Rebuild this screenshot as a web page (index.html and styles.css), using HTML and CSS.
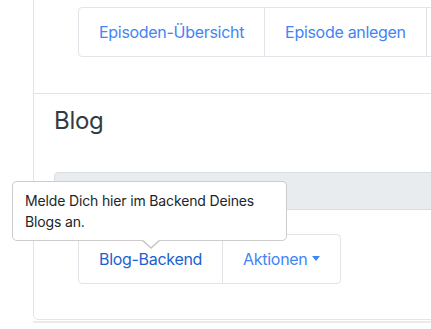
FILE: index.html
```html
<!DOCTYPE html>
<html lang="de">
<head>
  <meta charset="UTF-8">
  <meta name="viewport" content="width=device-width, initial-scale=1.0">
  <title>Podcast</title>
  <link rel="stylesheet" href="styles.css">
</head>
<body>
<div class="page">
  <div class="card">
    <div class="card-section">
      <div class="btn-group">
        <a class="btn" href="#">Episoden-Übersicht</a>
        <a class="btn" href="#">Episode anlegen</a>
        <a class="btn" href="#">Podcast-Einstellungen</a>
      </div>
    </div>

    <div class="card-section blog">
      <h4 class="section-title">Blog</h4>
      <div class="status-bar"></div>
      <div class="btn-group">
        <a class="btn btn-focus" href="#">Blog-Backend</a>
        <a class="btn dropdown-toggle" href="#">Aktionen</a>
        <div class="popover">Melde Dich hier im Backend Deines Blogs an.</div>
      </div>
    </div>
  </div>

  <div class="card-next"></div>
</div>
</body>
</html>
```

FILE: styles.css
```css
* {
  box-sizing: border-box;
}

:root {
  --link: #4285f4;
  --link-dark: #1c5fd0;
  --border: #e1e4e8;
  --light-gray: #e9ecef;
  --text: #212529;
}

html, body {
  margin: 0;
  padding: 0;
  overflow: hidden;
  background: #fff;
}

body {
  font-family: Inter, "Liberation Sans", sans-serif;
  color: var(--text);
}

.page {
  padding-left: 33px;
}

.card {
  width: 720px;
  margin-top: -30px;
  background: #fff;
  border: 1px solid var(--border);
  border-radius: 5px;
}

.card-section {
  padding: 36px 20px;
}

.card-section + .card-section {
  border-top: 1px solid var(--border);
}

.blog {
  padding-top: 13px;
  padding-bottom: 35px;
}

.section-title {
  margin: 0 0 36px;
  font-size: 24px;
  line-height: 1.2;
  font-weight: 400;
  letter-spacing: -0.3px;
  color: #343a40;
}

.status-bar {
  height: 38px;
  margin-bottom: 24px;
  background: var(--light-gray);
  border: 1px solid #dadee2;
  border-radius: 4px 0 0 4px;
}

.btn-group {
  position: relative;
  display: inline-flex;
  margin-left: 24px;
  border: 1px solid var(--border);
  border-radius: 4px;
  white-space: nowrap;
}

.btn {
  padding: 12px 20px;
  font-size: 16px;
  line-height: 24px;
  letter-spacing: -0.3px;
  color: var(--link);
  text-decoration: none;
}

.btn + .btn {
  border-left: 1px solid var(--border);
}

.btn-focus {
  color: var(--link-dark);
}

.dropdown-toggle::after {
  content: "";
  display: inline-block;
  margin-left: 5px;
  vertical-align: 4px;
  border-top: 5px solid;
  border-left: 4.5px solid transparent;
  border-right: 4.5px solid transparent;
}

/* popover over the Blog-Backend button */
.popover {
  position: absolute;
  left: -67px;
  top: -54px;
  z-index: 10;
  width: 275px;
  padding: 8px 12px;
  font-size: 14px;
  line-height: 21px;
  letter-spacing: -0.15px;
  color: var(--text);
  white-space: normal;
  background: #fff;
  border: 1px solid rgba(0, 0, 0, 0.2);
  border-radius: 5px;
}

.popover::before,
.popover::after {
  content: "";
  position: absolute;
  left: 129px;
  border-left: 9px solid transparent;
  border-right: 9px solid transparent;
}

.popover::before {
  bottom: -9px;
  border-top: 8px solid rgba(0, 0, 0, 0.22);
}

.popover::after {
  bottom: -7px;
  border-top: 8px solid #fff;
}

.card-next {
  width: 720px;
  height: 20px;
  margin-top: 1px;
  border-top: 2px solid var(--light-gray);
}
```
